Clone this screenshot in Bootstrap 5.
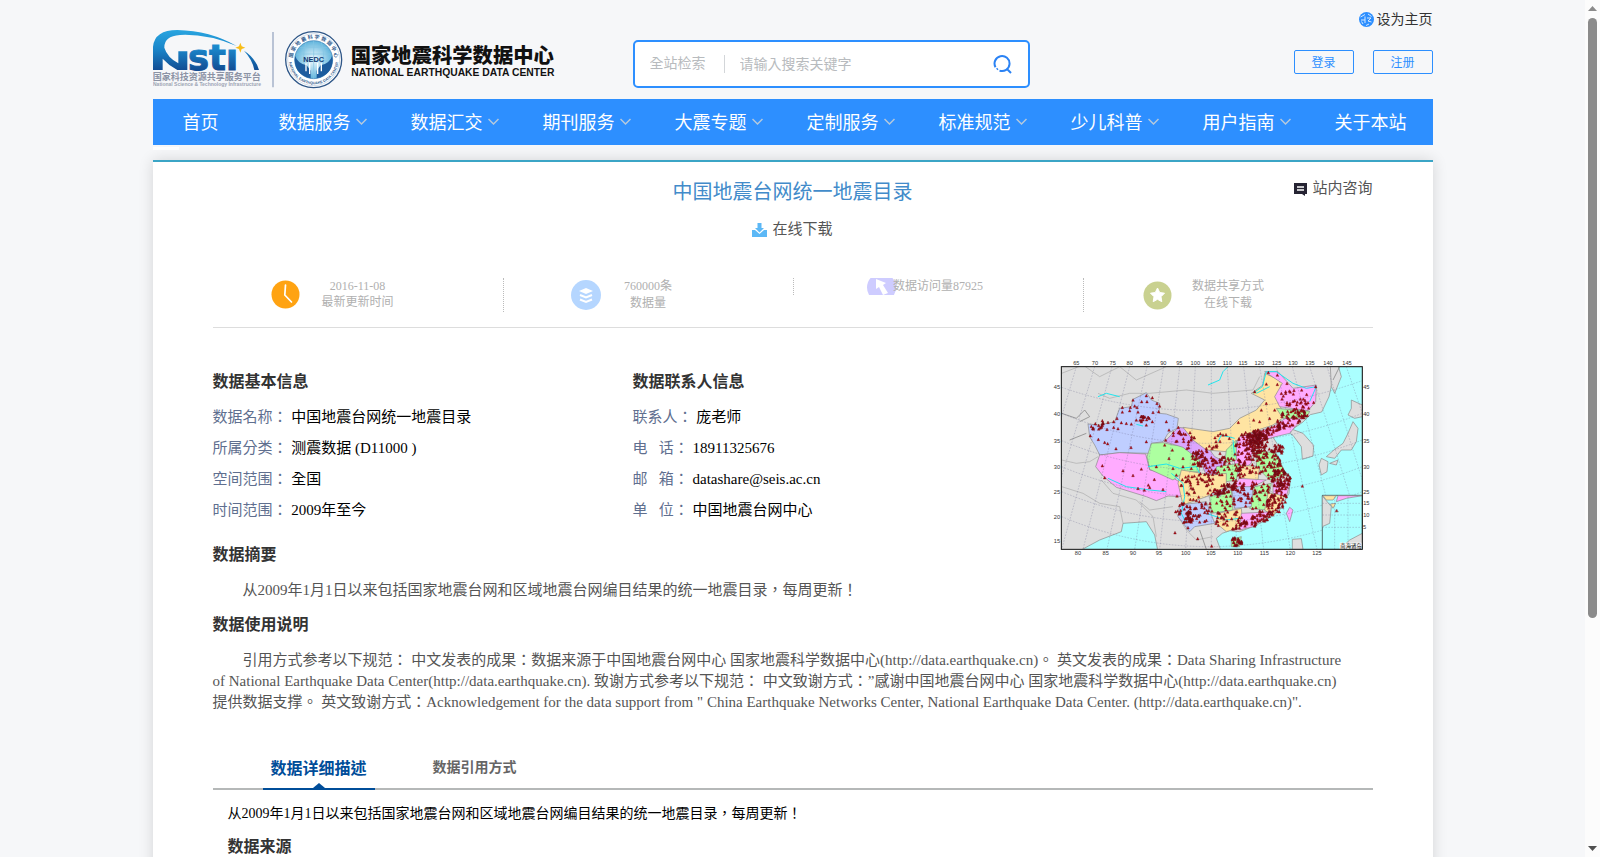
<!DOCTYPE html>
<html lang="zh">
<head>
<meta charset="utf-8">
<meta name="viewport" content="width=device-width, initial-scale=1">
<title>中国地震台网统一地震目录</title>
<link rel="stylesheet" href="https://cdn.jsdelivr.net/npm/bootstrap@5.3.0/dist/css/bootstrap.min.css">
<style>
body{font-family:"Liberation Serif","Noto Sans CJK TC",serif;-webkit-locale:"zh-Hant";font-size:14px;line-height:21px;color:#000;background:#f6f7f9;height:100vh;overflow:hidden}
a{text-decoration:none}
svg text{font-family:"Liberation Sans","Noto Sans CJK SC",sans-serif}
.viewport-area{min-width:0;overflow:hidden}
.site-width{max-width:1280px}
.site-header{display:grid;grid-template-columns:480px 397px 1fr}
.site-logo{margin-top:28px;width:404px;height:62px}
.home-link{color:#333;margin-top:9px;gap:3px}
.search-box{margin:40px 0 11px;height:48px;border:2px solid #2d8fff;border-radius:5px;background:#fff;padding:0 15px}
.search-box select,.search-box input{border:0;background:none;outline:0;font-size:14px;padding:0;color:#b8bbbe;appearance:none}
.search-box select{width:75px;height:18px;line-height:18px;border-right:1px solid #d3d6d9}
.search-box input{margin-left:15px}
.search-box input::placeholder{color:#b8bbbe}
.search-box button{border:0;background:none;padding:0;width:20px;height:20px}
.account-btn{width:60px;height:24px;border:1px solid #2d8fff;border-radius:2px;color:#2d8fff;background:none;font-size:12px;line-height:20px;padding:2px 0 0}
.account-row{gap:19px;margin-top:20px}
.main-nav{background:#2d8fff;height:46px}
.main-nav a{position:relative;color:#fff;font-size:18px;line-height:48px;padding:0 30px;white-space:nowrap}
.main-nav svg{position:absolute;right:14px;top:19px}
.nav-stub{width:26px;height:3px;margin:2px 0 10px;background:#fff}
.detail-card{background:#fff;border-top:2px solid #3ba5c6;box-shadow:0 0 14px rgba(0,0,0,.14);padding:16px 60px 60px}
.title-row{display:grid;grid-template-columns:1fr auto 1fr}
.title-row h1{font-size:20px;line-height:28px;color:#428bca;font-weight:400}
.body-text{font-size:15px}
.soft-link{font-size:15px;color:#555}
.download-row{margin-top:13px}
.stats{display:grid;grid-template-columns:repeat(4,1fr);align-items:start;margin-top:35px;padding-bottom:15px;border-bottom:1px solid #ddd;font-size:12px;line-height:17px;color:#b0b0b0}
.stat{display:grid;text-align:center;overflow:hidden}
.stat>*{grid-area:1/1}
.stat+.stat{border-left:1px dotted #bbb}
.stat svg{margin:2px 0 0 58px}
.stat.updated{line-height:16px}
.stat.volume svg{margin-left:67px}
.stat.sharing svg{margin-left:59px}
.stat.visits{height:17px}
.stat.visits svg{margin:-5px 0 0 73px}
.info-grid{display:grid;grid-template-columns:420px 420px 1fr;margin-top:42px}
.section-title{font-size:16px;line-height:24px;font-weight:700;color:#333;margin:0}
.info-list{margin:8px 0 0;font-size:15px;line-height:31px}
.info-list dt,.info-list dd{display:inline;font-weight:400;margin:0}
.info-list dt{color:#5f6f8f}
.map{width:320px;height:200px;margin:-10px 0 -40px}
.abstract-title{margin-top:17px}
.source-title{margin-top:11px}
.summary{color:#555;text-indent:2em;margin:13px 28px 12px 0}
.detail-tabs{margin-top:44px;border-bottom:2px solid #b5b8b8;padding-left:50px;gap:58px}
.detail-tabs a{font-size:14px;line-height:22px;font-weight:700;color:#666;padding-bottom:9px}
.detail-tabs a.active{position:relative;font-size:16px;line-height:24px;color:#004d99;padding:0 8px 7px;border-bottom:2px solid #004d99;margin-bottom:-2px}
.detail-tabs a.active::after{content:"";position:absolute;left:50%;bottom:0;margin-left:-6px;border:6px solid transparent;border-top:0;border-bottom:5px solid #004d99}
.tab-body{padding:13px 15px 0}
.scroll-strip{width:15px;background:#fcfcfc;flex:none}
.scroll-strip .thumb{width:9px;height:70vh;border-radius:5px;background:#8b8b8b;margin-top:7px}
</style>
<script src="https://cdn.jsdelivr.net/npm/bootstrap@5.3.0/dist/js/bootstrap.bundle.min.js"></script>
</head>
<body class="d-flex">
<div class="viewport-area flex-grow-1">
<div class="site-width mx-auto">
  <header class="site-header">
    <a href="#" aria-label="国家地震科学数据中心">
      <svg class="site-logo d-block" viewBox="39 84 1212 186">
        <defs>
          <linearGradient id="swoosh" gradientUnits="userSpaceOnUse" x1="0" y1="90" x2="0" y2="212"><stop offset="0" stop-color="#29a5e0"/><stop offset=".45" stop-color="#1a87cb"/><stop offset="1" stop-color="#114b92"/></linearGradient>
          <radialGradient id="globe"><stop offset="0" stop-color="#f2fbff"/><stop offset="1" stop-color="#5fb4dc"/></radialGradient>
        </defs>
        <path d="M39 210V140Q44 90 112 90Q210 92 290 138Q200 101 120 105Q72 108 73 143Q82 172 115 190V154H142V210H112Q86 196 68 176V210Z" fill="url(#swoosh)"/>
        <path d="M312 152Q345 172 357 210H343Q338 180 312 152Z" fill="url(#swoosh)"/>
        <text x="144" y="209" font-size="106" font-weight="700" fill="url(#swoosh)" stroke="url(#swoosh)" stroke-width="3" style="font-family:'DejaVu Sans',sans-serif">stı</text>
        <path d="M301 128L305 139L316 143L305 147L301 158L297 147L286 143L297 139Z" fill="#f8bd18"/>
        <text x="38" y="239" font-size="27" font-weight="700" fill="#8c93a5">国家科技资源共享服务平台</text>
        <text x="39" y="257" font-size="15" font-weight="700" fill="#9da4b4">National Science &amp; Technology Infrastructure</text>
        <path d="M399 96V262" stroke="#adb9ce" stroke-width="5"/>
        <circle cx="521" cy="179" r="84" fill="#fff" stroke="#2f5788" stroke-width="4"/>
        <circle cx="521" cy="179" r="78" fill="none" stroke="#7d9cc0" stroke-width="1"/>
        <circle cx="521" cy="179" r="57" fill="url(#globe)" stroke="#3b7db4" stroke-width="2"/>
        <path d="M470 162H572M480 142H562M466 182H576M521 122V236M498 126Q482 178 500 230M544 126Q560 178 542 230" fill="none" stroke="#83c6e4" stroke-width="2"/>
        <path d="M466 168Q472 190 500 196L512 212V235Q466 226 464 180ZM576 168Q570 190 542 196L530 212V235Q576 226 578 180Z" fill="#1d5c9e"/>
        <path d="M498 190V214M509 188V222M533 188V222M544 190V214" stroke="#fff" stroke-width="4"/>
        <text x="521" y="185" text-anchor="middle" font-size="22" font-weight="700" fill="#123c74">NEDC</text>
        <path id="arcTop" d="M459 190A63 63 0 1 1 583 190" fill="none"/>
        <path id="arcBottom" d="M447 179A74 74 0 0 0 595 179" fill="none"/>
        <text font-size="15" font-weight="700" fill="#315b8d"><textPath href="#arcTop" startOffset="50%" text-anchor="middle">国 家 地 震 科 学 数 据 中 心</textPath></text>
        <text font-size="11" font-weight="700" fill="#315b8d"><textPath href="#arcBottom" startOffset="50%" text-anchor="middle">NATIONAL EARTHQUAKE DATA CENTER</textPath></text>
        <text x="632" y="190" font-size="61" font-weight="900" fill="#111">国家地震科学数据中心</text>
        <text x="634" y="229" font-size="31" font-weight="700" fill="#111">NATIONAL EARTHQUAKE DATA CENTER</text>
      </svg>
    </a>
    <form class="search-box d-flex align-items-center">
      <select aria-label="检索范围"><option>全站检索</option></select>
      <input class="flex-grow-1" type="text" aria-label="关键字" placeholder="请输入搜索关键字">
      <button type="button" aria-label="搜索" class="d-flex"><svg width="20" height="20" fill="none" stroke="#2a82f4" stroke-width="2"><path d="M2.500 13.200A7.500 7.500 0 1 1 6.500 16.600M3.800 15.500L4.800 14.500M13.500 14.500L18 19"/></svg></button>
    </form>
    <div class="d-flex flex-column align-items-end">
      <a class="home-link d-flex align-items-center" href="#"><svg width="15" height="15"><circle cx="7.500" cy="7.500" r="7.500" fill="#2d8fff"/><path d="M1.500 5L6 2.500M2 8H6M6 4.500V11M8 6H12L9 9L12.500 10M4 12L2.500 9.500M9 2L12.500 4.500M7 13.500L10 12" stroke="#d5e9ff" stroke-width="1" fill="none"/></svg>设为主页</a>
      <div class="account-row d-flex"><button class="account-btn" type="button">登录</button><button class="account-btn" type="button">注册</button></div>
    </div>
  </header>
  <nav class="main-nav d-flex" id="mainNav">
    <a href="#">首页</a>
    <a href="#" class="has-menu">数据服务</a><a href="#" class="has-menu">数据汇交</a><a href="#" class="has-menu">期刊服务</a><a href="#" class="has-menu">大震专题</a><a href="#" class="has-menu">定制服务</a><a href="#" class="has-menu">标准规范</a><a href="#" class="has-menu">少儿科普</a><a href="#" class="has-menu">用户指南</a>
    <a href="#">关于本站</a>
  </nav>
  <div class="nav-stub"></div>
  <main class="detail-card">
    <div class="title-row">
      <span></span>
      <h1 class="m-0">中国地震台网统一地震目录</h1>
      <a class="soft-link text-end" href="#"><svg width="15" height="14"><path d="M0 0H13V11H11V13L8 11H0Z" fill="#262433"/><path d="M3 4H10M3 7H10" stroke="#fff" stroke-width="1.500"/></svg> 站内咨询</a>
    </div>
    <div class="download-row text-center"><a class="soft-link d-inline-flex align-items-center" href="#"><svg class="me-1" width="16" height="15"><path d="M5.500 1H9.500V6H12L7.500 10.500L3 6H5.500ZM0 8H3L7.500 12L12 8H15V15H0Z" fill="#5cb8f6"/></svg>在线下载</a></div>
    <div class="stats">
      <div class="stat updated">
        <svg width="29" height="29"><circle cx="14.500" cy="14.500" r="14" fill="#ffa312"/><path d="M14.500 5L13.800 15L20.500 22" fill="none" stroke="#fff" stroke-width="1.700" stroke-linecap="round"/></svg>
        <div>2016-11-08<br>最新更新时间</div>
      </div>
      <div class="stat volume">
        <svg width="30" height="30"><circle cx="15" cy="15" r="15" fill="#b5d6ff"/><path d="M15 8L22 11L15 14L8 11Z" fill="#fff"/><path d="M9 15L15 17.500L21 15M9 19.500L15 22L21 19.500" fill="none" stroke="#fff" stroke-width="2"/></svg>
        <div>760000条<br>数据量</div>
      </div>
      <div class="stat visits">
        <svg width="29" height="29"><circle cx="14.500" cy="14.500" r="14.500" fill="#ceccff"/><path d="M9 6L19 10L16 12L21 20L16 22L12 14L9 16Z" fill="#fff"/></svg>
        <div>数据访问量87925</div>
      </div>
      <div class="stat sharing">
        <svg width="29" height="30"><circle cx="14.500" cy="15.500" r="14" fill="#c9d190"/><path d="M14.500 8L16.700 12.500L21.500 13.200L18 16.700L18.800 21.700L14.500 19.300L10.200 21.700L11 16.700L7.500 13.200L12.300 12.500Z" fill="#fff" stroke="#fff"/></svg>
        <div>数据共享方式<br>在线下载</div>
      </div>
    </div>
    <div class="info-grid">
      <section><h2 class="section-title">数据基本信息</h2>
        <dl class="info-list">
          <div><dt>数据名称：</dt> <dd>中国地震台网统一地震目录</dd></div>
          <div><dt>所属分类：</dt> <dd>测震数据 (D11000 )</dd></div>
          <div><dt>空间范围：</dt> <dd>全国</dd></div>
          <div><dt>时间范围：</dt> <dd>2009年至今</dd></div>
        </dl></section>
      <section><h2 class="section-title">数据联系人信息</h2>
        <dl class="info-list">
          <div><dt>联系人：</dt> <dd>庞老师</dd></div>
          <div><dt>电&nbsp;&nbsp;&nbsp;话：</dt> <dd>18911325676</dd></div>
          <div><dt>邮&nbsp;&nbsp;&nbsp;箱：</dt> <dd>datashare@seis.ac.cn</dd></div>
          <div><dt>单&nbsp;&nbsp;&nbsp;位：</dt> <dd>中国地震台网中心</dd></div>
        </dl></section>
      <svg class="map" viewBox="40 30 960 600" role="img" aria-label="地震台站分布图">
        <defs><clipPath id="frame"><rect x="65" y="50" width="903" height="548"/></clipPath></defs>
        <g clip-path="url(#frame)" stroke="#888" stroke-width="2" stroke-linejoin="round">
          <rect x="65" y="50" width="903" height="548" fill="#aaffff"/>
          <path fill="#dedede" d="M60 45H895L880 85L868 140L846 186L812 194L790 216L758 238L790 250L822 286L820 318L788 328L785 290L760 256L736 240L700 262L715 285L736 296L705 310L690 330L722 362L752 385L748 430L720 480L680 510L640 530L600 545L570 542L548 550L530 565L545 605H355L345 555L320 515L250 520L245 545L180 570L115 605H60Z"/>
          <path fill="#dedede" d="M935 150L968 165V200L945 205L925 195L935 175ZM940 215L955 235L950 275L935 300L905 300L885 325L860 320L885 298L910 280L925 250ZM845 325L865 335L862 365L845 375L838 345ZM870 340L895 330L890 345ZM872 50L895 45L905 80L885 130L875 110ZM758 568L785 566L790 598H758Z"/>
          <g fill="none" stroke="#aaa"><path d="M66 70L130 45L180 80L240 50L290 90L380 50M175 130L210 145L270 130L330 130L440 120L520 130L640 120L660 80M66 330L110 340L150 335L175 320M185 390L220 430L290 450L340 500L350 560M66 410L130 430L180 460L240 470L250 520M410 490L440 540L470 570L520 560M300 455L330 480L400 470"/><path d="M66 190L110 205L135 180L150 200L120 215M480 540L500 598M900 50L880 90M90 270L140 250" stroke="#777"/></g>
          <path fill="#bfceff" d="M320 128L335 150L360 160L358 190L380 192L416 205L412 235L385 250L370 275L335 280L330 310L240 308L180 315L165 285L150 260L145 222L180 225L225 215L240 175L275 170L280 148Z"/>
          <path fill="#ffabff" d="M180 315L240 308L318 312L330 360L380 370L425 400L428 440L385 438L350 452L320 440L230 412L190 378L168 350Z"/>
          <path fill="#adffa0" d="M335 280L370 278L400 285L455 290L478 320L480 365L430 368L400 390L330 358L322 320Z"/>
          <path fill="#dca5ff" d="M416 232L440 235L460 270L500 285L525 320L555 335L540 375L500 375L480 330L430 292L375 275Z"/>
          <path fill="#ffe4a2" d="M430 232L520 245L570 235L600 205L650 180L675 150L635 130L670 105L675 70L730 95L722 170L735 200L700 225L640 245L600 265L560 305L500 300L460 270Z"/>
          <path fill="#ffabff" d="M675 65L715 65L760 115L830 105L828 155L805 182L720 170L705 140L728 100ZM600 260L640 250L700 230L760 190L800 190L750 250L700 262L640 280L635 340L590 370L580 310Z"/>
          <path fill="#adffa0" d="M710 175L810 184L800 205L730 205ZM650 300L710 310L740 375L690 390L650 350ZM560 300L590 270L590 330L555 340ZM510 440L575 420L580 480L515 490ZM645 410L695 400L680 480L630 475ZM530 350L600 340L590 390L530 400Z"/>
          <path fill="#ffe4a2" d="M425 360L520 375L560 370L560 410L500 440L430 465L415 400ZM600 345L660 350L655 390L600 390ZM535 490L605 475L610 530L560 545L530 520ZM685 430L740 430L700 500L675 480Z"/>
          <path fill="#bfceff" d="M420 465L500 455L525 520L465 530L450 545L415 500ZM575 410L640 405L635 470L585 475ZM515 430L570 410L540 440Z"/>
          <path fill="#ffabff" d="M600 385L680 390L640 410L580 410ZM700 395L752 395L740 440L700 430ZM605 490L700 485L640 530L600 540ZM740 490L750 472L760 480L750 515Z"/>
          <path fill="#adffa0" d="M575 568L605 560L600 590L575 590Z"/>
          <g fill="none" stroke="#21e5ed" stroke-width="3"><path d="M325 350L380 342L420 355L470 350L480 370M395 370L430 400L435 440L425 490L440 520M205 385L260 410L330 420L380 425M505 105L540 90L550 65L565 50M640 130L668 110L680 65L710 65L760 100L800 115L830 110L810 155M535 275L545 255L585 265M580 270L585 320M290 223L310 228M650 130L690 110M500 490L560 510L600 505M175 140L200 130L240 140"/></g>
          <path fill="none" stroke="#777799" stroke-width="1" stroke-dasharray="5 4" d="M110 50L60 220M165 50L60 400M217 50L66 598M270 50L130 598M322 50L202 598M372 50L285 598M420 50L360 598M467 50L438 598M515 50V598M563 50L592 598M612 50L672 598M660 50L752 598M710 50L832 598M758 50L900 598M810 50L968 560M862 50L968 390M920 50L968 190M66 112Q490 260 968 92M66 190Q500 370 968 190M66 272Q500 450 968 270M66 350Q500 530 968 350M66 425Q500 605 968 425M66 500Q500 680 968 500"/>
          <path id="stations" fill="#b00c15" stroke="#6a1018" stroke-width="1"/>
          <g><rect x="848" y="436" width="120" height="162" fill="#aaffff" stroke="#222"/><path fill="#dedede" d="M848 438L875 470L870 520L848 530ZM968 550L930 570L900 598H968Z"/><path fill="#ffe4a2" d="M850 437H890L880 450H860ZM872 462L888 460L880 475Z"/><path fill="#ffabff" d="M895 437H968L920 445L890 455Z"/><path d="M885 440V598M925 440V598M848 460H968M848 495H968M848 532H968" stroke="#777799" stroke-width="1" stroke-dasharray="5 4"/><path fill="#a80c15" d="M886 486L891 477L896 486Z"/><rect x="900" y="578" width="66" height="19" fill="#fff" stroke="none"/></g>
        </g>
        <text x="902" y="594" font-size="16">南海诸岛</text>
        <rect x="65" y="50" width="903" height="548" fill="none" stroke="#111" stroke-width="3"/>
        <g id="degrees" font-size="17" fill="#333" text-anchor="middle"></g>
      </svg>
    </div>
    <h2 class="section-title abstract-title">数据摘要</h2>
    <p class="summary body-text">从2009年1月1日以来包括国家地震台网和区域地震台网编目结果的统一地震目录，每周更新！</p>
    <h2 class="section-title">数据使用说明</h2>
    <p class="summary body-text mb-0">引用方式参考以下规范： 中文发表的成果：数据来源于中国地震台网中心 国家地震科学数据中心(http://data.earthquake.cn)。 英文发表的成果：Data Sharing Infrastructure of National Earthquake Data Center(http://data.earthquake.cn). 致谢方式参考以下规范： 中文致谢方式：”感谢中国地震台网中心 国家地震科学数据中心(http://data.earthquake.cn) 提供数据支撑。 英文致谢方式：Acknowledgement for the data support from " China Earthquake Networks Center, National Earthquake Data Center. (http://data.earthquake.cn)".</p>
    <nav class="detail-tabs d-flex"><a href="#" class="active">数据详细描述</a><a href="#">数据引用方式</a></nav>
    <div class="tab-body">
      <p class="m-0">从2009年1月1日以来包括国家地震台网和区域地震台网编目结果的统一地震目录，每周更新！</p>
      <h2 class="section-title source-title">数据来源</h2>
    </div>
  </main>
</div>
</div>
<div class="scroll-strip d-flex flex-column align-items-center" aria-hidden="true">
  <svg class="mt-1" width="9" height="7"><path d="M0 7L4.500 2L9 7Z" fill="#8b8b8b"/></svg>
  <div class="thumb"></div>
  <svg class="mt-auto mb-1" width="9" height="7"><path d="M0 0L4.500 5L9 0Z" fill="#505050"/></svg>
</div>
<script>
document.querySelectorAll('.has-menu').forEach(a => a.insertAdjacentHTML('beforeend',
  '<svg width="11" height="8" fill="none" stroke="#b5c9dd" stroke-width="1.500"><path d="M.500 1L5.500 6L10.500 1"/></svg>'));

// Stations: single sites first, then dense networks given as [cx, cy, rx, ry, count, tilt]
const sites = [[320,137],[280,150],[306,155],[322,155],[338,143],[352,160],[360,168],[248,172],[272,172],[285,168],[292,172],[270,182],[248,186],[295,186],[340,187],[357,185],[232,205],[245,218],[260,220],[275,222],[290,210],[305,215],[320,225],[338,215],[380,215],[222,215],[222,232],[235,236],[202,238],[185,232],[152,257],[176,268],[195,277],[204,281],[229,296],[274,292],[320,275],[388,240],[416,232],[378,270],[375,285],[388,325],[398,300],[430,325],[188,347],[195,383],[250,362],[280,376],[305,357],[344,388],[295,415],[314,420],[330,412],[370,418],[326,405],[412,438],[350,350],[400,355],[430,350],[410,375],[455,355],[408,485],[406,548],[516,588],[474,566],[788,408],[686,67],[713,75],[680,102],[713,103],[645,125],[742,100],[828,110],[738,125],[725,130],[680,160],[642,210],[690,205],[596,217],[660,215],[665,180],[705,180],[550,255]];
const nets = [[312,205,18,8,14,0],[170,232,22,12,10,0],[200,218,25,7,6,0],[430,265,40,28,24,.5],[475,325,22,25,40,0],[515,330,38,45,40,0],[545,270,25,20,8,0],[652,275,34,36,120,0],[690,245,60,12,50,-.4],[620,300,35,55,70,0],[770,150,55,35,32,0],[755,205,55,26,60,-.3],[715,298,18,16,22,0],[570,350,45,35,38,0],[560,415,35,14,50,-.4],[480,405,58,38,50,0],[690,345,34,60,90,-.5],[725,390,28,30,60,0],[625,390,45,50,40,0],[650,440,55,45,42,0],[710,455,28,40,50,.5],[600,455,40,40,20,0],[545,460,40,35,20,0],[465,485,52,40,55,0],[440,500,22,40,20,0],[570,515,42,26,28,0],[650,508,60,18,55,-.4],[590,573,18,14,26,0]];
let seed = 7;
const rnd = () => (seed = seed * 16807 % 2147483647) / 2147483647;
nets.forEach(([cx, cy, rx, ry, n, t]) => {
  while (n--) {
    const a = rnd() * 6.283, r = Math.sqrt(rnd()), u = rx * r * Math.cos(a), v = ry * r * Math.sin(a);
    sites.push([Math.round(cx + u * Math.cos(t) - v * Math.sin(t)), Math.round(cy + u * Math.sin(t) + v * Math.cos(t))]);
  }
});
document.getElementById('stations').setAttribute('d', sites.map(([x, y]) => `M${x - 4} ${y + 4}l4-8l4 8z`).join(''));

const northLon = [110,166,219,270,321,371,419,467,514,563,610,659,711,760,811,865,922];
const southLon = [115,198,280,358,438,514,594,674,752,832];
const lat = [112,191,272,350,425,500,574];
const put = (x, y, t) => `<text x="${x}" y="${y}">${t}</text>`;
document.getElementById('degrees').innerHTML =
  northLon.map((x, i) => put(x, 44, 65 + i * 5)).join('') +
  southLon.map((x, i) => put(x, 616, 80 + i * 5)).join('') +
  lat.map((y, i) => put(52, y + 6, 45 - i * 5)).join('') +
  lat.slice(0, 5).map((y, i) => put(980, y + 6, 45 - i * 5)).join('') +
  put(980, 466, 15) + put(980, 502, 10) + put(975, 538, 5);
</script>
</body>
</html>
